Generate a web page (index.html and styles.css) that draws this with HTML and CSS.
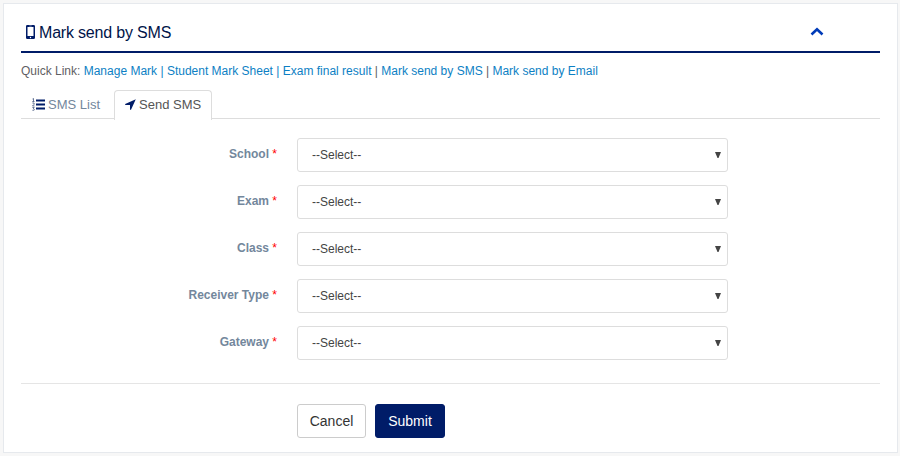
FILE: index.html
```html
<!DOCTYPE html>
<html lang="en">
<head>
<meta charset="utf-8">
<title>Mark send by SMS</title>
<link rel="stylesheet" href="styles.css">
</head>
<body>
<main class="panel">
  <header class="panel-title">
    <svg class="mobile" viewBox="0 0 9 14"><path fill-rule="evenodd" d="M1.300 0h6.400Q9 0 9 1.300v11.400Q9 14 7.700 14H1.300Q0 14 0 12.700V1.300Q0 0 1.300 0zM1.500 2v9h6V2zM3.300.8v.5h2.400V.8zM4.500 11.800a.7.7 0 1 0 0 1.400.7.7 0 0 0 0-1.400z"/></svg>
    <h1>Mark send by SMS</h1>
    <svg class="chevron" viewBox="0 0 14 9"><path d="M1.500 7.500 7 2.300l5.500 5.200"/></svg>
  </header>
  <nav class="quick"><span>Quick Link:</span> <a>Manage Mark</a> <a>|</a> <a>Student Mark Sheet</a> <a>|</a> <a>Exam final result</a> | <a>Mark send by SMS</a> | <a>Mark send by Email</a></nav>
  <div class="tabs">
    <div class="tab">
      <svg class="list" viewBox="0 0 14 13"><path d="M4 1.500h9v2H4zM4 5.500h9v2H4zM4 9.500h9v2H4z"/><path class="digits" d="M.5 1 1.500.5V3.500M.3 3.500h2.200M.4 5h1.700v1.300L.5 8h2M.4 9.500h1.800L1.300 10.800q1.400.2.900 1.300T.4 12.200"/></svg>
      <span>SMS List</span>
    </div>
    <div class="tab active">
      <svg class="arrow" viewBox="0 0 11 11"><path d="M10.800.2 6 10.800H5V6H.2V5z"/></svg>
      <span>Send SMS</span>
    </div>
  </div>
  <form class="form">
    <div class="row"><label>School <b>*</b></label><div class="select"><span>--Select--</span><svg viewBox="0 0 6 6"><path d="M0 0h6L3.500 6h-1z"/></svg></div></div>
    <div class="row"><label>Exam <b>*</b></label><div class="select"><span>--Select--</span><svg viewBox="0 0 6 6"><path d="M0 0h6L3.500 6h-1z"/></svg></div></div>
    <div class="row"><label>Class <b>*</b></label><div class="select"><span>--Select--</span><svg viewBox="0 0 6 6"><path d="M0 0h6L3.500 6h-1z"/></svg></div></div>
    <div class="row"><label>Receiver Type <b>*</b></label><div class="select"><span>--Select--</span><svg viewBox="0 0 6 6"><path d="M0 0h6L3.500 6h-1z"/></svg></div></div>
    <div class="row"><label>Gateway <b>*</b></label><div class="select"><span>--Select--</span><svg viewBox="0 0 6 6"><path d="M0 0h6L3.500 6h-1z"/></svg></div></div>
    <div class="actions">
      <button type="button" class="btn cancel">Cancel</button>
      <button type="button" class="btn submit">Submit</button>
    </div>
  </form>
</main>
</body>
</html>
```
FILE: styles.css
```css
* { box-sizing: border-box; }
body {
  margin: 0;
  padding: 3px 2px 3px 3px;
  height: 456px;
  overflow: hidden;
  background: #f7f7f7;
  color: #5f6063;
  font-family: "Liberation Sans", Arial, sans-serif;
}
.panel {
  height: 450px;
  padding: 0 17px;
  background: #fff;
  border: 1px solid #e6e9ed;
}
svg { display: block; flex: none; fill: #001c68; }
.panel-title {
  display: flex;
  height: 49px;
  padding: 2px 56px 0 5px;
  align-items: center;
  border-bottom: 2px solid #001c68;
}
h1 {
  margin: 9px 0 0 4px;
  font-size: 16px;
  line-height: 20px;
  font-weight: 400;
  letter-spacing: -.19px;
  color: #001449;
}
.mobile { width: 9px; height: 14px; margin-top: 6px; }
.chevron { width: 14px; height: 9px; margin: 5px 0 0 auto; fill: none; stroke: #003bb8; stroke-width: 2.600; }
.quick {
  height: 37px;
  padding-top: 10px;
  font-size: 12px;
  line-height: 17px;
  white-space: nowrap;
}
.quick a { color: #0d7fc4; }
.tabs { display: flex; height: 29px; border-bottom: 1px solid #ddd; }
.tab {
  display: flex;
  width: 93px;
  height: 29px;
  padding-left: 11px;
  align-items: center;
  gap: 3px;
  font-size: 13px;
  letter-spacing: .02px;
  color: #73879c;
  white-space: nowrap;
}
.tab.active {
  width: 98px;
  height: 30px;
  padding: 0 0 2px 10px;
  color: #555;
  background: #fff;
  border: 1px solid #ddd;
  border-bottom: 0;
  border-radius: 4px 4px 0 0;
}
.list { width: 14px; height: 13px; }
.list + span { margin-left: -1px; }
.list .digits { fill: none; stroke: #44577d; stroke-width: .8; }
.arrow { width: 11px; height: 11px; }
.form { padding-top: 19px; }
.row { display: flex; height: 34px; margin-bottom: 13px; }
label {
  width: 256px;
  margin-right: 20px;
  padding-top: 8px;
  font-size: 12px;
  line-height: 16px;
  font-weight: 700;
  color: #73879c;
  text-align: right;
}
label b { color: #f00; font-weight: 400; }
.select {
  display: flex;
  width: 431px;
  height: 34px;
  padding: 0 6px 0 14px;
  align-items: center;
  justify-content: space-between;
  font-size: 12px;
  color: #444;
  border: 1px solid #ddd;
  border-radius: 3px;
}
.select svg { width: 6px; height: 6px; fill: #444; }
.actions {
  display: flex;
  gap: 9px;
  margin-top: 23px;
  padding: 20px 0 0 276px;
  border-top: 1px solid #e5e5e5;
}
.btn {
  height: 34px;
  padding: 0;
  font: 14px "Liberation Sans", Arial, sans-serif;
  border-radius: 3px;
}
.cancel { width: 69px; color: #333; background: #fff; border: 1px solid #ccc; }
.submit { width: 70px; color: #fff; background: #001c68; border: 1px solid #001c68; }
```
